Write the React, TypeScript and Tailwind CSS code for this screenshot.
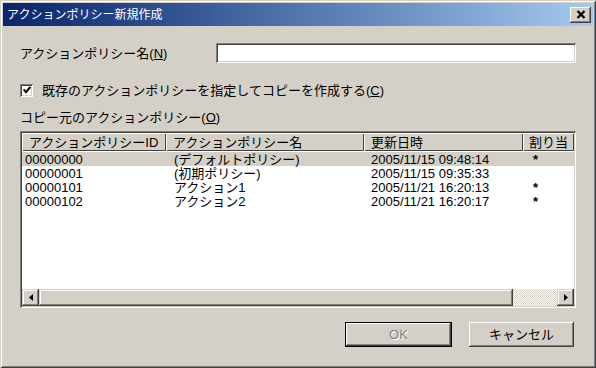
import React from "react";

const cols = ["w-[144px]", "w-[198px]", "w-[159px]"];

const rows = [
  { id: "00000000", name: "(デフォルトポリシー)", date: "2005/11/15 09:48:14", mark: "*" },
  { id: "00000001", name: "(初期ポリシー)", date: "2005/11/15 09:35:33", mark: "" },
  { id: "00000101", name: "アクション1", date: "2005/11/21 16:20:13", mark: "*" },
  { id: "00000102", name: "アクション2", date: "2005/11/21 16:20:17", mark: "*" },
];

const Arrow = ({ dir }: { dir: "left" | "right" }) => (
  <svg width="4" height="7" viewBox="0 0 4 7">
    {dir === "left" ? <path d="M4 0 L0 3.5 L4 7 Z" fill="#000" /> : <path d="M0 0 L4 3.5 L0 7 Z" fill="#000" />}
  </svg>
);

export default function App() {
  return (
    <div className="w-[596px] h-[368px] bg-[#d4d0c8] p-[3px] flex flex-col text-[13px] text-black leading-none font-['Liberation_Sans','Noto_Sans_CJK_JP',sans-serif] shadow-[inset_1px_1px_#d4d0c8,inset_-1px_-1px_#404040,inset_2px_2px_#ffffff,inset_-2px_-2px_#808080]">
      {/* title bar */}
      <div className="h-[23px] flex items-center justify-between pl-[4px] pr-[2px] bg-linear-to-r from-[#0a246a] to-[#a6caf0]">
        <span className="text-white text-[12px]">アクションポリシー新規作成</span>
        <div className="w-[21px] h-[16px] bg-[#d4d0c8] flex items-center justify-center shadow-[inset_-1px_-1px_#404040,inset_1px_1px_#ffffff,inset_-2px_-2px_#808080]">
          <svg width="10" height="9" viewBox="0 0 10 9">
            <path d="M1.5 1 L8.5 8 M8.5 1 L1.5 8" stroke="#000" strokeWidth="2.2" />
          </svg>
        </div>
      </div>

      <div className="flex-1 flex flex-col px-[17px]">
        {/* name */}
        <div className="mt-[17px] h-[20px] flex items-center">
          <span className="w-[196px]">
            アクションポリシー名(<span className="underline">N</span>)
          </span>
          <div className="flex-1 h-[20px] bg-white shadow-[inset_1px_1px_#808080,inset_-1px_-1px_#ffffff,inset_2px_2px_#404040,inset_-2px_-2px_#d4d0c8]" />
        </div>

        {/* checkbox */}
        <div className="mt-[19px] h-[16px] flex items-center">
          <div className="w-[13px] h-[13px] bg-white flex items-center justify-center shadow-[inset_1px_1px_#808080,inset_-1px_-1px_#ffffff,inset_2px_2px_#404040,inset_-2px_-2px_#d4d0c8]">
            <svg width="8" height="8" viewBox="0 0 8 8">
              <path d="M0.7 3.5 L3 6.2 L7.3 1" stroke="#000" strokeWidth="2" fill="none" />
            </svg>
          </div>
          <span className="ml-[9px]">
            既存のアクションポリシーを指定してコピーを作成する(<span className="underline">C</span>)
          </span>
        </div>

        <div className="mt-[11px] h-[16px] flex items-center">
          コピー元のアクションポリシー(<span className="underline">O</span>)
        </div>

        {/* list */}
        <div className="mt-[6px] h-[177px] p-[2px] flex flex-col bg-white shadow-[inset_1px_1px_#808080,inset_-1px_-1px_#ffffff,inset_2px_2px_#404040,inset_-2px_-2px_#d4d0c8]">
          <div className="h-[18px] flex bg-[#d4d0c8]">
            {["アクションポリシーID", "アクションポリシー名", "更新日時"].map((h, i) => (
              <div
                key={h}
                className={`${cols[i]} h-full flex items-center pl-[7px] shadow-[inset_1px_1px_#ffffff,inset_-1px_-1px_#404040]`}
              >
                {h}
              </div>
            ))}
            <div className="flex-1 h-full flex items-center pl-[6px] whitespace-nowrap shadow-[inset_1px_1px_#ffffff,inset_-1px_-1px_#404040]">
              割り当
            </div>
          </div>

          <div className="flex-1 flex flex-col pt-[1px]">
            {rows.map((r, i) => (
              <div key={r.id} className={`h-[14px] flex items-center ${i === 0 ? "bg-[#d4d0c8]" : ""}`}>
                <div className="w-[144px] pl-[3px]">{r.id}</div>
                <div className="w-[198px] pl-[8px]">{r.name}</div>
                <div className="w-[159px] pl-[7px]">{r.date}</div>
                <div className="flex-1 pl-[10px] font-bold">{r.mark}</div>
              </div>
            ))}
          </div>

          {/* horizontal scrollbar */}
          <div className="h-[17px] flex">
            <div className="w-[17px] h-full bg-[#d4d0c8] flex items-center justify-center shadow-[inset_-1px_-1px_#404040,inset_1px_1px_#d4d0c8,inset_-2px_-2px_#808080,inset_2px_2px_#ffffff]">
              <Arrow dir="left" />
            </div>
            <div className="w-[474px] h-full bg-[#d4d0c8] shadow-[inset_-1px_-1px_#404040,inset_1px_1px_#d4d0c8,inset_-2px_-2px_#808080,inset_2px_2px_#ffffff]" />
            <div className="flex-1 h-full bg-[repeating-conic-gradient(#ffffff_0_25%,#d4d0c8_0_50%)] bg-size-[2px_2px]" />
            <div className="w-[17px] h-full bg-[#d4d0c8] flex items-center justify-center shadow-[inset_-1px_-1px_#404040,inset_1px_1px_#d4d0c8,inset_-2px_-2px_#808080,inset_2px_2px_#ffffff]">
              <Arrow dir="right" />
            </div>
          </div>
        </div>

        {/* buttons */}
        <div className="mt-[14px] flex justify-end gap-[17px] pr-[2px]">
          <div className="w-[107px] h-[25px] border border-black bg-[#d4d0c8] flex items-center justify-center shadow-[inset_-1px_-1px_#404040,inset_1px_1px_#ffffff,inset_-2px_-2px_#808080]">
            <span className="text-[#808080] [text-shadow:1px_1px_#ffffff]">OK</span>
          </div>
          <div className="w-[105px] h-[25px] bg-[#d4d0c8] flex items-center justify-center shadow-[inset_-1px_-1px_#404040,inset_1px_1px_#ffffff,inset_-2px_-2px_#808080]">
            キャンセル
          </div>
        </div>
      </div>
    </div>
  );
}
